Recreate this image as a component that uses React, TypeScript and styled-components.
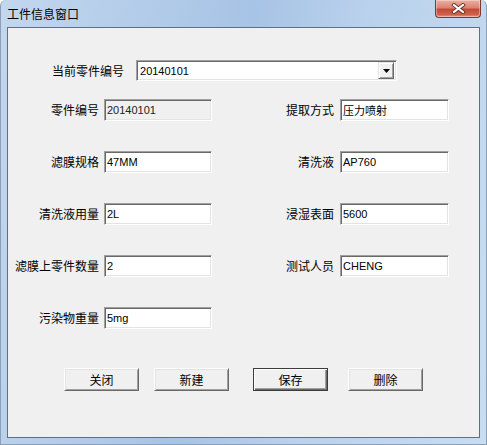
import React from 'react';
import styled, { createGlobalStyle } from 'styled-components';

const GlobalStyle = createGlobalStyle`
  html, body {
    margin: 0;
    padding: 0;
    overflow: hidden;
    background: #ffffff;
  }
`;

const cjk = `"Noto Sans CJK SC", "Noto Sans", sans-serif`;

const Window = styled.div`
  width: 487px;
  height: 445px;
  box-sizing: border-box;
  display: flex;
  flex-direction: column;
  padding: 0 6px 6px 6px;
  border-radius: 6px 6px 0 0;
  border: 1px solid #8aa0b9;
  border-top: none;
  background: linear-gradient(
    100deg,
    #c3d7ee 0%,
    #b3cce9 25%,
    #a7c3e5 45%,
    #b9d1ec 65%,
    #c9dcf1 100%
  );
`;

const TitleBar = styled.div`
  height: 27px;
  flex-shrink: 0;
  display: flex;
  align-items: flex-start;
  justify-content: space-between;
`;

const Title = styled.span`
  font-family: ${cjk};
  font-size: 12px;
  line-height: 12px;
  color: #000;
  margin-top: 8px;
`;

const CloseButton = styled.div`
  width: 46px;
  height: 18px;
  margin-right: -1px;
  box-sizing: border-box;
  display: flex;
  align-items: center;
  justify-content: center;
  border: 1px solid #7a3a30;
  border-top: none;
  border-radius: 0 0 4px 4px;
  background: linear-gradient(
    180deg,
    #eab0a2 0%,
    #dc8373 45%,
    #c44a36 55%,
    #cd604a 85%,
    #e29a84 100%
  );
  box-shadow: inset 0 0 0 1px rgba(255, 255, 255, 0.35);
`;

const Client = styled.div`
  flex: 1;
  display: flex;
  flex-direction: column;
  background: #f0f0f0;
  border: 1px solid #5d7088;
  padding-top: 32px;
`;

const ComboRow = styled.div`
  display: flex;
  align-items: center;
  height: 21px;
  padding-left: 44px;
  gap: 12px;
`;

const Label = styled.span`
  font-family: ${cjk};
  font-size: 12px;
  line-height: 14px;
  color: #000;
  white-space: nowrap;
`;

const Combo = styled.div`
  width: 261px;
  height: 21px;
  box-sizing: border-box;
  display: flex;
  align-items: center;
  justify-content: space-between;
  background: #fff;
  border: 1px solid;
  border-color: #a0a0a0 #ffffff #ffffff #a0a0a0;
  box-shadow: inset 1px 1px 0 #696969, inset -1px -1px 0 #e3e3e3;
  padding: 1px 2px 1px 3px;
`;

const ComboText = styled.span`
  font-family: "Liberation Sans", Arial, sans-serif;
  font-size: 11px;
  color: #000;
`;

const DropButton = styled.div`
  width: 16px;
  height: 17px;
  box-sizing: border-box;
  display: flex;
  align-items: center;
  justify-content: center;
  background: #f0f0f0;
  border: 1px solid;
  border-color: #e3e3e3 #696969 #696969 #e3e3e3;
  box-shadow: inset 1px 1px 0 #ffffff, inset -1px -1px 0 #a0a0a0;
`;

const Fields = styled.div`
  display: flex;
  flex-direction: column;
  gap: 30px;
  margin-top: 18px;
`;

const FieldRow = styled.div`
  display: grid;
  grid-template-columns: 96px 108px 128px 109px;
  height: 22px;
  align-items: center;
`;

const FieldLabel = styled(Label)<{ $right?: boolean }>`
  text-align: right;
  padding-right: ${(p) => (p.$right ? 6 : 5)}px;
`;

const Edit = styled.div<{ $disabled?: boolean }>`
  height: 22px;
  box-sizing: border-box;
  display: flex;
  align-items: center;
  padding-left: 2px;
  background: ${(p) => (p.$disabled ? '#f0f0f0' : '#ffffff')};
  border: 1px solid;
  border-color: #a0a0a0 #ffffff #ffffff #a0a0a0;
  box-shadow: inset 1px 1px 0 #696969, inset -1px -1px 0 #e3e3e3;
  font-family: "Liberation Sans", Arial, ${cjk};
  font-size: 11px;
  color: ${(p) => (p.$disabled ? '#222' : '#000')};
  white-space: nowrap;
  overflow: hidden;
`;

const ButtonRow = styled.div`
  display: flex;
  margin-top: 39px;
`;

const PushButton = styled.div<{ $offset: number; $default?: boolean }>`
  width: 75px;
  height: 23px;
  box-sizing: border-box;
  margin-left: ${(p) => p.$offset}px;
  display: flex;
  align-items: center;
  justify-content: center;
  background: #f0f0f0;
  font-family: ${cjk};
  font-size: 12px;
  color: #000;
  border: 1px solid;
  border-color: ${(p) =>
    p.$default ? '#3c3c3c' : '#ffffff #696969 #696969 #ffffff'};
  box-shadow: ${(p) =>
    p.$default
      ? 'inset 1px 1px 0 #ffffff, inset -1px -1px 0 #696969, inset -2px -2px 0 #a0a0a0'
      : 'inset 1px 1px 0 #e3e3e3, inset -1px -1px 0 #a0a0a0'};
`;

type Field = { label: string; value: string; disabled?: boolean };

const rows: [Field, Field | null][] = [
  [
    { label: '零件编号', value: '20140101', disabled: true },
    { label: '提取方式', value: '压力喷射' },
  ],
  [
    { label: '滤膜规格', value: '47MM' },
    { label: '清洗液', value: 'AP760' },
  ],
  [
    { label: '清洗液用量', value: '2L' },
    { label: '浸湿表面', value: '5600' },
  ],
  [
    { label: '滤膜上零件数量', value: '2' },
    { label: '测试人员', value: 'CHENG' },
  ],
  [{ label: '污染物重量', value: '5mg' }, null],
];

const buttons = [
  { text: '关闭', offset: 56 },
  { text: '新建', offset: 15 },
  { text: '保存', offset: 24, isDefault: true },
  { text: '删除', offset: 20 },
];

const App = () => {
  return (
    <>
      <GlobalStyle />
      <Window>
        <TitleBar>
          <Title>工件信息窗口</Title>
          <CloseButton>
            <svg width="15" height="11" viewBox="0 0 15 11">
              <path
                d="M3 2 L12 9 M12 2 L3 9"
                stroke="#5a2820"
                strokeWidth="3.8"
                strokeLinecap="square"
              />
              <path
                d="M3 2 L12 9 M12 2 L3 9"
                stroke="#ffffff"
                strokeWidth="2.2"
                strokeLinecap="square"
              />
            </svg>
          </CloseButton>
        </TitleBar>
        <Client>
          <ComboRow>
            <Label>当前零件编号</Label>
            <Combo>
              <ComboText>20140101</ComboText>
              <DropButton>
                <svg width="7" height="4" viewBox="0 0 7 4">
                  <path d="M0 0 H7 L3.5 4 Z" fill="#000" />
                </svg>
              </DropButton>
            </Combo>
          </ComboRow>
          <Fields>
            {rows.map(([left, right], i) => (
              <FieldRow key={i}>
                <FieldLabel>{left.label}</FieldLabel>
                <Edit $disabled={left.disabled}>{left.value}</Edit>
                {right && (
                  <>
                    <FieldLabel $right>{right.label}</FieldLabel>
                    <Edit>{right.value}</Edit>
                  </>
                )}
              </FieldRow>
            ))}
          </Fields>
          <ButtonRow>
            {buttons.map((b) => (
              <PushButton key={b.text} $offset={b.offset} $default={b.isDefault}>
                {b.text}
              </PushButton>
            ))}
          </ButtonRow>
        </Client>
      </Window>
    </>
  );
};

export default App;
